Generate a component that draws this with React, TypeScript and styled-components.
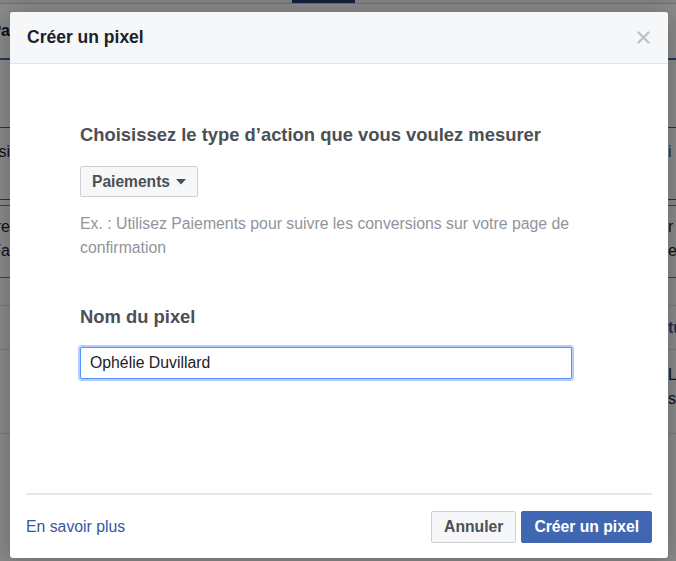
import styled, { createGlobalStyle } from 'styled-components'

const GlobalStyle = createGlobalStyle`
    html, body {
        margin: 0;
        padding: 0;
        width: 676px;
        height: 561px;
        overflow: hidden;
        font-family: "Liberation Sans", Helvetica, Arial, sans-serif;
        background: #fff;
    }
`

const Page = styled.div`
    position: relative;
    width: 676px;
    height: 561px;
    overflow: hidden;
    background: #fff;
`

const TopBar = styled.div`
    height: 3px;
    background: #f2f3f5;
    border-bottom: 1px solid #c9ccd1;
    display: flex;
    padding-left: 292px;
`

const TopTab = styled.div`
    width: 63px;
    height: 3px;
    background: #23386b;
`

const Row = styled.div<{ h: number; line: string; thick?: boolean; pad?: number }>`
    box-sizing: border-box;
    height: ${p => p.h + (p.thick ? 2 : 1)}px;
    display: flex;
    align-items: ${p => (p.pad ? 'flex-start' : 'center')};
    padding-top: ${p => p.pad || 0}px;
    border-bottom: ${p => (p.thick ? 2 : 1)}px solid ${p => p.line};
    font-size: 16px;
    line-height: 24px;
    color: #1d2129;
`

const EdgeLeft = styled.div<{ bold?: boolean }>`
    width: 10px;
    flex: none;
    overflow: hidden;
    display: flex;
    justify-content: flex-end;
    white-space: pre;
    text-align: right;
    font-weight: ${p => (p.bold ? 700 : 400)};
`

const Middle = styled.div`
    flex: 1;
`

const EdgeRight = styled.div<{ blue?: boolean; bold?: boolean }>`
    width: 8px;
    flex: none;
    overflow: hidden;
    white-space: pre;
    color: ${p => (p.blue ? '#365899' : '#1d2129')};
    font-weight: ${p => (p.bold ? 700 : 400)};
`

const Overlay = styled.div`
    position: absolute;
    inset: 0;
    background: rgba(0, 0, 0, 0.46);
`

const Modal = styled.div`
    position: absolute;
    left: 10px;
    top: 12px;
    width: 658px;
    height: 546px;
    background: #fff;
    border-radius: 3px;
    box-shadow: 0 2px 26px rgba(0, 0, 0, 0.25);
    display: flex;
    flex-direction: column;
    overflow: hidden;
`

const Header = styled.div`
    height: 51px;
    flex: none;
    background: #f6f7f9;
    border-bottom: 1px solid #e5e5e5;
    display: flex;
    align-items: center;
    justify-content: space-between;
    padding: 0 17px 0 17px;

    h2 {
        margin: 0;
        font-size: 17.5px;
        font-weight: 700;
        color: #1d2129;
    }
`

const CloseButton = styled.button`
    border: 0;
    background: none;
    padding: 0;
    width: 15px;
    height: 15px;
    display: flex;
    align-items: center;
    justify-content: center;
    cursor: pointer;
`

const Body = styled.div`
    flex: 1;
    padding: 61px 96px 0 70px;
    display: flex;
    flex-direction: column;
    align-items: flex-start;
`

const Label = styled.h3<{ gap: number }>`
    margin: 0 0 ${p => p.gap}px 0;
    font-size: 18.4px;
    line-height: 20px;
    font-weight: 700;
    color: #4b4f56;
`

const Dropdown = styled.button`
    height: 31px;
    padding: 0 11px 0 11px;
    display: flex;
    align-items: center;
    gap: 6px;
    background: #f6f7f9;
    border: 1px solid #ced0d4;
    border-radius: 2px;
    font-family: inherit;
    font-size: 15.6px;
    font-weight: 700;
    color: #4b4f56;
    cursor: pointer;
`

const Help = styled.p`
    margin: 15px 0 47px 0;
    font-size: 15.8px;
    line-height: 24px;
    color: #90949c;
`

const NameInput = styled.input`
    box-sizing: border-box;
    width: 492px;
    height: 32px;
    padding: 0 9px;
    border: 1px solid #5890ff;
    border-radius: 2px;
    box-shadow: 0 0 0 2px rgba(88, 144, 255, 0.45);
    outline: none;
    font-family: inherit;
    font-size: 15.8px;
    color: #1d2129;
`

const Footer = styled.div`
    flex: none;
    margin: 0 16px;
    border-top: 2px solid #e5e6e9;
    padding: 16px 0 15px 0;
    display: flex;
    align-items: center;
    justify-content: space-between;
`

const LearnMore = styled.a`
    font-size: 15.8px;
    color: #365899;
    text-decoration: none;
    cursor: pointer;
`

const Actions = styled.div`
    display: flex;
    gap: 5px;
`

const Button = styled.button<{ primary?: boolean }>`
    height: 32px;
    padding: 0 12px;
    border-radius: 2px;
    border: 1px solid ${p => (p.primary ? '#4267b2' : '#ced0d4')};
    background: ${p => (p.primary ? '#4267b2' : '#f6f7f9')};
    color: ${p => (p.primary ? '#fff' : '#4b4f56')};
    font-family: inherit;
    font-size: 15.7px;
    font-weight: 700;
    cursor: pointer;
`

const rows = [
    { h: 54, line: '#4267b2', thick: true, left: 'Pa', right: '', bold: true },
    { h: 67, line: '#4267b2', left: '', right: '' },
    { h: 71, line: '#4267b2', left: 'Précisi', right: 'i', rightBlue: true, pad: 12 },
    { h: 5, line: '#d9534f', left: '', right: '' },
    { h: 71, line: '#d9534f', left: 'Suivre\nFa', right: 'r\ne', pad: 9 },
    { h: 27, line: '#dddfe2', left: '', right: '' },
    { h: 43, line: '#dddfe2', left: '', right: 'tu', rightBlue: true, rightBold: true },
    { h: 83, line: '#dddfe2', left: '', right: 'Lu\nst', pad: 13 },
]

export default function App() {
    return (
        <Page>
            <GlobalStyle />
            <TopBar>
                <TopTab />
            </TopBar>
            {rows.map((r, i) => (
                <Row key={i} h={r.h} line={r.line} thick={r.thick} pad={r.pad}>
                    <EdgeLeft bold={r.bold}>{r.left}</EdgeLeft>
                    <Middle />
                    <EdgeRight blue={r.rightBlue} bold={r.rightBold}>{r.right}</EdgeRight>
                </Row>
            ))}
            <Overlay />

            <Modal>
                <Header>
                    <h2>Créer un pixel</h2>
                    <CloseButton aria-label="Fermer">
                        <svg width="13" height="13" viewBox="0 0 13 13">
                            <path d="M1.5 1.5 L11.5 11.5 M11.5 1.5 L1.5 11.5" stroke="#bec2c9" strokeWidth="2.4" strokeLinecap="round" />
                        </svg>
                    </CloseButton>
                </Header>

                <Body>
                    <Label gap={21}>Choisissez le type d’action que vous voulez mesurer</Label>
                    <Dropdown>
                        Paiements
                        <svg width="10" height="6" viewBox="0 0 10 6">
                            <path d="M0 0 L10 0 L5 5.5 Z" fill="#4b4f56" />
                        </svg>
                    </Dropdown>
                    <Help>
                        Ex. : Utilisez Paiements pour suivre les conversions sur votre page de
                        <br />
                        confirmation
                    </Help>
                    <Label gap={20}>Nom du pixel</Label>
                    <NameInput defaultValue="Ophélie Duvillard" />
                </Body>

                <Footer>
                    <LearnMore>En savoir plus</LearnMore>
                    <Actions>
                        <Button>Annuler</Button>
                        <Button primary>Créer un pixel</Button>
                    </Actions>
                </Footer>
            </Modal>
        </Page>
    )
}
